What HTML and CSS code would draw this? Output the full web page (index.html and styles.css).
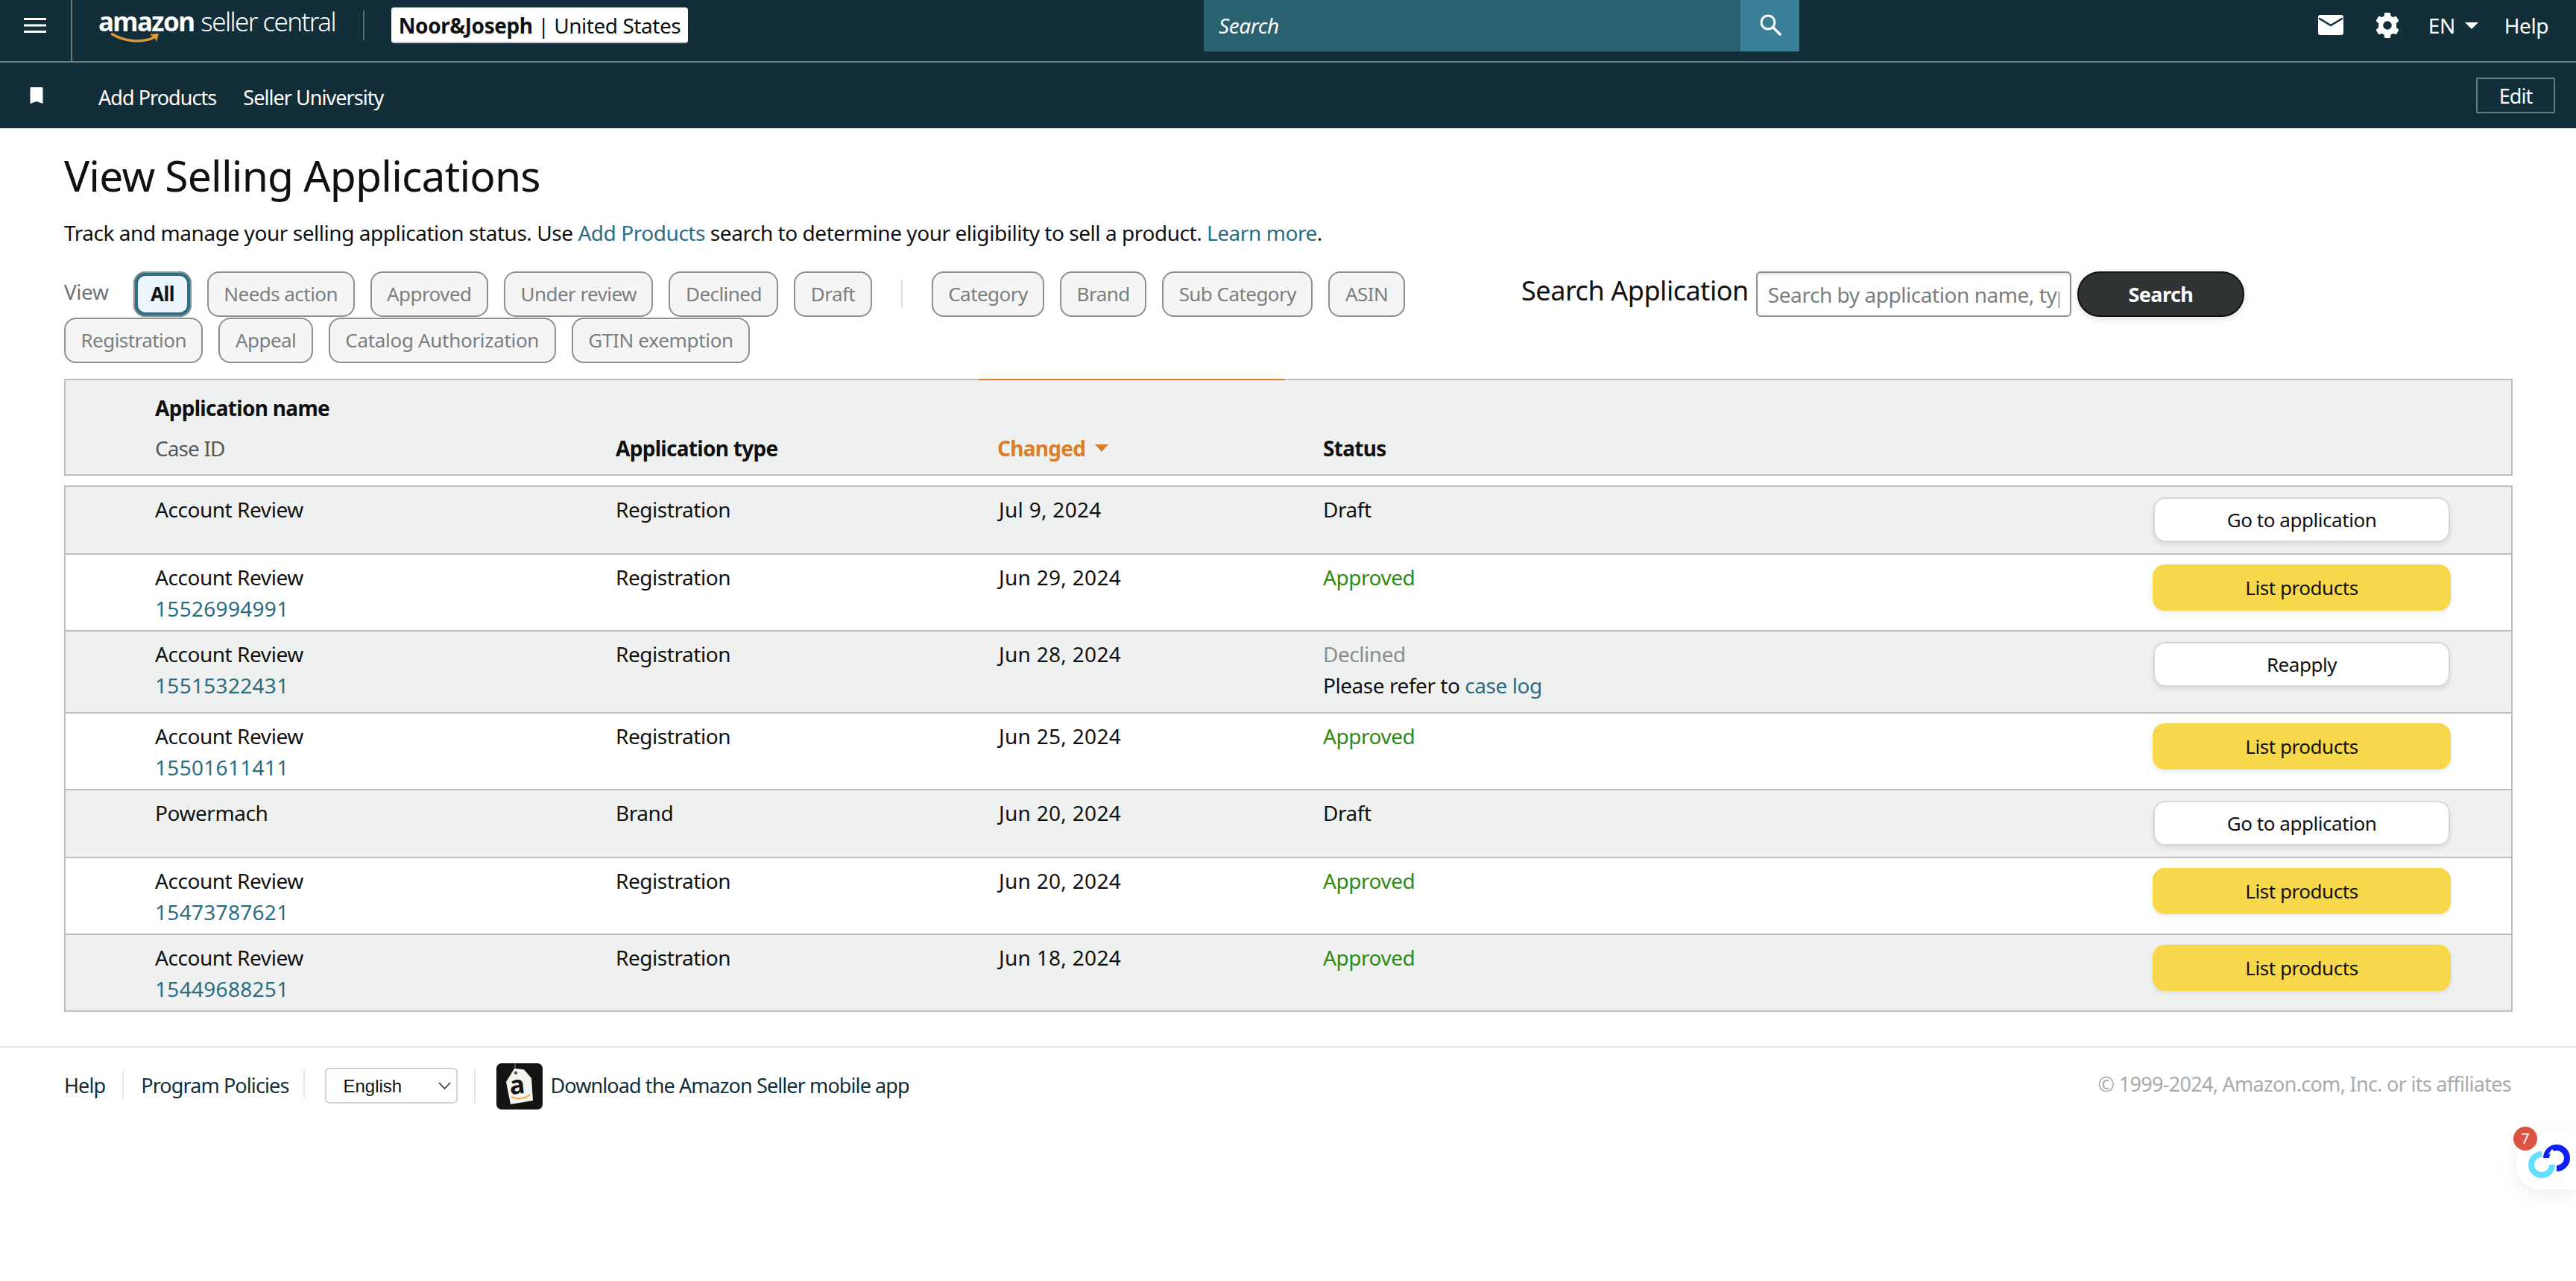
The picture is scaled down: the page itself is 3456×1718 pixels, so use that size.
FILE: index.html
```html
<!DOCTYPE html>
<html lang="en">
<head>
<meta charset="utf-8">
<title>View Selling Applications</title>
<link rel="stylesheet" href="styles.css">
</head>
<body>
<header class="topbar">
  <div class="menu-cell">
    <svg class="hamburger" viewBox="0 0 30 20"><path d="M0 1.5h30M0 10h30M0 18.5h30" stroke="#fff" stroke-width="3"/></svg>
  </div>
  <div class="logo">
    <span class="logo-amazon">amazon</span><span class="logo-seller">seller central</span>
    <svg class="logo-smile" viewBox="0 0 66 16"><path d="M1 1.5C18 12 42 14 58 6" fill="none" stroke="#e3983a" stroke-width="3.4" stroke-linecap="round"/><path d="M52 2l12-1-3 11c-1-3-2-5-4-6z" fill="#e3983a"/></svg>
  </div>
  <div class="logo-divider"></div>
  <div class="store"><b>Noor&amp;Joseph</b> | United States</div>
  <div class="search-box">
    <div class="search-field">Search</div>
    <div class="search-btn">
      <svg viewBox="0 0 30 30" class="search-icon"><circle cx="12" cy="12" r="9" fill="none" stroke="#fff" stroke-width="3"/><path d="M18.5 18.5L28 28" stroke="#fff" stroke-width="3.4" stroke-linecap="round"/></svg>
    </div>
  </div>
  <div class="top-right">
    <svg class="mail" viewBox="0 0 34 27"><rect width="34" height="27" rx="3" fill="#fff"/><path d="M1 4.5L17 14L33 4.5" fill="none" stroke="#122e38" stroke-width="2.6"/></svg>
    <svg class="gear" viewBox="0 0 32 34"><path fill="#fff" fill-rule="evenodd" d="M12.4 0h7.200l1 4.600 2.600 1.500 4.600-1.400L31.400 11l-3.500 3.200v5.600l3.500 3.200-3.600 6.300-4.600-1.400-2.600 1.500-1 4.600h-7.200l-1-4.600-2.600-1.500-4.600 1.400L.6 23l3.500-3.200v-5.600L.6 11l3.600-6.300 4.600 1.400 2.600-1.500zM16 11.200a5.800 5.800 0 1 0 0 11.600 5.800 5.800 0 0 0 0-11.600z"/></svg>
    <span class="lang">EN</span>
    <span class="caret"></span>
    <span class="help">Help</span>
  </div>
</header>

<nav class="subnav">
  <svg class="bookmark" viewBox="0 0 18 22"><path fill="#fff" d="M2 0h14a1.500 1.500 0 0 1 1.500 1.500V22L9 19 .5 22V1.500A1.500 1.500 0 0 1 2 0z"/></svg>
  <a class="subnav-link">Add Products</a>
  <a class="subnav-link">Seller University</a>
  <button class="edit-btn">Edit</button>
</nav>

<main class="content">
  <h1 class="title">View Selling Applications</h1>
  <p class="intro">Track and manage your selling application status. Use <a class="link">Add Products</a> search to determine your eligibility to sell a product. <a class="link">Learn more</a>.</p>

  <section class="filters">
    <div class="chips">
      <span class="view-label">View</span>
      <span class="chip chip-active">All</span>
      <span class="chip">Needs action</span>
      <span class="chip">Approved</span>
      <span class="chip">Under review</span>
      <span class="chip">Declined</span>
      <span class="chip">Draft</span>
      <span class="chip-sep"></span>
      <span class="chip">Category</span>
      <span class="chip">Brand</span>
      <span class="chip">Sub Category</span>
      <span class="chip">ASIN</span>
      <span class="chip">Registration</span>
      <span class="chip">Appeal</span>
      <span class="chip chip-long">Catalog Authorization</span>
      <span class="chip chip-long">GTIN exemption</span>
    </div>
    <div class="app-search">
      <label class="app-search-label">Search Application</label>
      <input class="app-search-input" placeholder="Search by application name, type, brand" readonly>
      <button class="app-search-btn">Search</button>
    </div>
  </section>

  <div class="table-head">
    <span class="head-accent"></span>
    <div class="cell-name"><div class="head-line"><b>Application name</b></div><div class="head-line head-sub">Case ID</div></div>
    <div class="cell-end"><b>Application type</b></div>
    <div class="cell-end head-sort"><b>Changed</b><span class="sort-caret"></span></div>
    <div class="cell-end"><b>Status</b></div>
  </div>

  <div class="table">
    <div class="row alt"><div>Account Review</div><div>Registration</div><div class="num">Jul 9, 2024</div><div>Draft</div><button class="btn btn-white">Go to application</button></div>
    <div class="row"><div>Account Review<br><a class="link num">15526994991</a></div><div>Registration</div><div class="num">Jun 29, 2024</div><div class="ok">Approved</div><button class="btn btn-yellow">List products</button></div>
    <div class="row alt row-tall"><div>Account Review<br><a class="link num">15515322431</a></div><div>Registration</div><div class="num">Jun 28, 2024</div><div><span class="declined">Declined</span><br>Please refer to <a class="link">case log</a></div><button class="btn btn-white">Reapply</button></div>
    <div class="row"><div>Account Review<br><a class="link num">15501611411</a></div><div>Registration</div><div class="num">Jun 25, 2024</div><div class="ok">Approved</div><button class="btn btn-yellow">List products</button></div>
    <div class="row alt"><div>Powermach</div><div>Brand</div><div class="num">Jun 20, 2024</div><div>Draft</div><button class="btn btn-white">Go to application</button></div>
    <div class="row"><div>Account Review<br><a class="link num">15473787621</a></div><div>Registration</div><div class="num">Jun 20, 2024</div><div class="ok">Approved</div><button class="btn btn-yellow">List products</button></div>
    <div class="row alt"><div>Account Review<br><a class="link num">15449688251</a></div><div>Registration</div><div class="num">Jun 18, 2024</div><div class="ok">Approved</div><button class="btn btn-yellow">List products</button></div>
  </div>
</main>

<footer class="footer">
  <a class="foot-link">Help</a>
  <span class="foot-sep"></span>
  <a class="foot-link">Program Policies</a>
  <span class="foot-sep foot-sep-b"></span>
  <select class="foot-select"><option>English</option></select>
  <span class="foot-sep foot-sep-tall"></span>
  <svg class="app-icon" viewBox="0 0 62 62">
    <rect width="62" height="62" rx="7" fill="#141414"/>
    <path d="M25 0v8" stroke="#666" stroke-width="1.500"/>
    <path d="M24 7l13 1.500L47 20l2 30-30 5-6-30z" fill="#f6f4ee"/>
    <circle cx="26" cy="13" r="2.200" fill="#555"/>
    <text x="28" y="41" class="app-icon-a" transform="rotate(-6 28 32)">a</text>
    <path d="M20 45c8 4 18 3 25-3" fill="none" stroke="#eaa94a" stroke-width="2.200"/>
  </svg>
  <a class="foot-link foot-app">Download the Amazon Seller mobile app</a>
  <span class="copyright">© 1999-2024, Amazon.com, Inc. or its affiliates</span>
</footer>

<aside class="widget">
  <span class="badge">7</span>
  <svg class="widget-logo" viewBox="0 0 56 46">
    <path d="M24 18A14 14 0 1 1 38 32" fill="none" stroke="#0a20f5" stroke-width="8"/>
    <path d="M18 13A14 14 0 1 0 32 27" fill="none" stroke="#62e0fb" stroke-width="8"/>
    <path d="M27 13L32 6l4 5z" fill="#fff"/>
  </svg>
</aside>
</body>
</html>
```
FILE: styles.css
```css
* { box-sizing: border-box; }
html, body { margin: 0; padding: 0; background: #fff; }
body {
  width: 3456px;
  height: 1718px;
  overflow: hidden;
  position: relative;
  font-family: "Noto Sans", "Open Sans", sans-serif;
  font-size: 28px;
  letter-spacing: -0.45px;
  color: #0f1111;
}
b { font-weight: 700; }
.link { color: #2b6c80; }

.topbar {
  height: 84px;
  background: #122e38;
  border-bottom: 2px solid #6c7a79;
  display: flex;
  align-items: flex-start;
  color: #fff;
}
.menu-cell {
  width: 97px;
  height: 82px;
  border-right: 2px solid #6c7a79;
  padding: 24px 0 0 32px;
  flex: none;
}
.hamburger { display: block; width: 30px; height: 20px; }
.logo {
  position: relative;
  margin-left: 35px;
  width: 320px;
  height: 62px;
  flex: none;
  display: flex;
  align-items: baseline;
  line-height: 62px;
  color: #fff;
  letter-spacing: 0;
  white-space: nowrap;
}
.logo-amazon { font-size: 35px; font-weight: 700; letter-spacing: -1.6px; margin-right: 9px; line-height: 58px; }
.logo-seller { font-size: 35px; font-weight: 300; letter-spacing: -1.6px; line-height: 58px; }
.logo-smile { position: absolute; left: 17px; top: 44px; width: 66px; height: 16px; }
.logo-divider { width: 2px; height: 40px; background: #55696c; margin: 14px 0 0 35px; flex: none; }
.store {
  margin: 10px 0 0 36px;
  width: 398px;
  height: 48px;
  background: #fff;
  border-radius: 4px;
  border-bottom: 2px solid #c4c8c8;
  color: #0f1111;
  text-align: center;
  line-height: 48px;
  white-space: nowrap;
  flex: none;
}
.search-box {
  margin-left: 692px;
  display: flex;
  height: 69px;
  flex: none;
}
.search-field {
  width: 720px;
  background: #2a6170;
  padding: 0 0 0 20px;
  line-height: 69px;
  font-style: italic;
  color: #fff;
}
.search-btn {
  width: 79px;
  background: #3a8098;
  padding: 18px 0 0 25px;
}
.search-icon { display: block; width: 30px; height: 30px; }
.top-right {
  margin-left: auto;
  height: 82px;
  display: flex;
  align-items: flex-start;
  padding-right: 37px;
  color: #fff;
}
.mail { width: 34px; height: 27px; margin: 20px 43px 0 0; }
.gear { width: 32px; height: 34px; margin: 17px 39px 0 0; }
.lang { line-height: 68px; margin-right: 13px; }
.caret {
  width: 0; height: 0;
  border-left: 9px solid transparent;
  border-right: 9px solid transparent;
  border-top: 9px solid #fff;
  margin: 30px 35px 0 0;
}
.help { line-height: 68px; }

.subnav {
  height: 88px;
  background: #122e38;
  display: flex;
  align-items: flex-start;
  color: #fff;
  padding: 0 28px 0 40px;
  font-size: 27px;
  letter-spacing: -0.95px;
}
.bookmark { width: 18px; height: 22px; margin: 33px 74px 0 0; flex: none; }
.subnav-link { line-height: 94px; margin-right: 36px; }
.edit-btn {
  margin: 20px 0 0 auto;
  width: 106px;
  height: 48px;
  background: transparent;
  border: 2px solid #6c7a79;
  border-radius: 2px;
  font: inherit;
  letter-spacing: inherit;
  color: #fff;
  padding: 0;
}

.content { padding: 0 85px 0 86px; }
.title {
  margin: 0;
  padding-top: 25px;
  font-size: 57px;
  font-weight: 400;
  line-height: 76px;
  letter-spacing: -0.84px;
  color: #0f1111;
}
.intro { margin: 19px 0 0; line-height: 40px; height: 40px; }

.filters { display: flex; margin-top: 32px; }
.chips {
  width: 1914px;
  display: flex;
  flex-wrap: wrap;
  row-gap: 1px;
  column-gap: 21px;
  font-size: 26px;
  letter-spacing: -0.55px;
  flex: none;
}
.view-label { color: #6c7378; line-height: 54px; font-size: 28px; letter-spacing: -0.45px; width: 72px; }
.chip {
  height: 61px;
  padding: 0 20.5px;
  line-height: 57px;
  border: 2px solid #8b908f;
  border-radius: 16px;
  background: #f5f5f5;
  color: #7a7e7e;
  white-space: nowrap;
}
.chip-long { letter-spacing: -0.3px; }
.chip-active {
  background: #edf5fc;
  color: #0f1111;
  font-weight: 700;
  border: 6px solid #2d6f84;
  outline: 2px solid #8b908f;
  outline-offset: -2px;
  line-height: 49px;
  padding: 0 17px;
  border-radius: 16px;
}
.chip-sep { width: 2px; height: 38px; background: #dde0e0; margin: 11px 18px 0 18px; }
.app-search { display: flex; align-items: flex-start; margin-left: 41px; }
.app-search-label { font-size: 36px; line-height: 52px; margin-right: 10px; color: #0f1111; letter-spacing: -0.45px; white-space: nowrap; }
.app-search-input {
  width: 423px;
  height: 61px;
  border: 2px solid #8b908f;
  border-radius: 6px;
  padding: 0 14px;
  font: inherit;
  letter-spacing: inherit;
  color: #6c7378;
  box-shadow: inset 0 2px 3px rgba(0,0,0,.12);
  outline: 0;
}
.app-search-input::placeholder { color: #7a7e7e; opacity: 1; }
.app-search-btn {
  margin-left: 8px;
  width: 224px;
  height: 61px;
  border: 2px solid #0f1111;
  border-radius: 30px;
  background: #303333;
  color: #fff;
  font: inherit;
  font-size: 27px;
  font-weight: 700;
  letter-spacing: -0.55px;
  box-shadow: 0 3px 8px rgba(0,0,0,.12);
}

.table-head, .row {
  display: grid;
  padding-left: 120px;
  line-height: 42px;
}
.table-head {
  position: relative;
  margin-top: 21px;
  height: 130px;
  background: #eff1f0;
  border: 2px solid #bbbfbe;
  padding-top: 16px;
  grid-template-columns: 618px 512px 437px 1fr;
}
.table-head b { letter-spacing: -0.7px; }
.head-line { height: 54px; line-height: 42px; }
.head-sub { color: #565959; letter-spacing: -0.9px; }
.cell-end { padding-top: 54px; }
.head-sort { color: #d97e2b; display: flex; align-items: flex-start; }
.sort-caret {
  width: 0; height: 0;
  border-left: 9px solid transparent;
  border-right: 9px solid transparent;
  border-top: 10px solid #d97e2b;
  margin: 16px 0 0 13px;
}
.head-accent {
  position: absolute;
  left: 1225px;
  top: -2px;
  width: 411px;
  height: 2px;
  background: #d97e2b;
}

.table { margin-top: 13px; border: 2px solid #bbbfbe; border-top: 0; }
.row {
  grid-template-columns: 618px 514px 435px 1fr 398px 82px;
  border-top: 2px solid #bbbfbe;
  padding-top: 9px;
  padding-bottom: 8px;
  background: #fff;
}
.num { letter-spacing: 0.3px; }
.row.alt { background: #eff1f0; }
.row-tall { padding-bottom: 15px; }
.ok { color: #2f8a12; }
.declined { color: #8a8d8d; }
.btn {
  font: inherit;
  letter-spacing: -0.45px;
  font-size: 26px;
  color: #0f1111;
  border-radius: 16px;
  align-self: start;
  padding: 0;
  width: 398px;
}
.btn-white {
  height: 60px;
  margin: 5px 0 7px;
  background: #fff;
  border: 2px solid #d5d9d9;
  box-shadow: 0 3px 6px rgba(15,17,17,.1);
}
.btn-yellow {
  width: 400px;
  height: 62px;
  margin: 4px 0 0 -1px;
  background: #f8d84b;
  border: 0;
  box-shadow: 0 3px 6px rgba(15,17,17,.08);
}

.footer {
  margin-top: 46px;
  border-top: 2px solid #e6e8e8;
  padding: 21px 87px 0 86px;
  display: flex;
  align-items: flex-start;
  height: 100px;
  font-size: 27px;
  letter-spacing: -0.9px;
}
.foot-link { color: #122e38; line-height: 60px; white-space: nowrap; }
.foot-sep { width: 2px; height: 38px; background: #e6e8e8; margin: 9px 23px 0 23px; flex: none; }
.foot-sep-b { margin: 9px 27px 0 20px; }
.foot-sep-tall { height: 48px; margin: 7px 28px 0 22px; }
.foot-select {
  appearance: none;
  -webkit-appearance: none;
  width: 178px;
  height: 48px;
  margin-top: 6px;
  border: 2px solid #cfd1d1;
  border-radius: 6px;
  background: #fff url("data:image/svg+xml,%3Csvg xmlns='http://www.w3.org/2000/svg' width='17' height='10'%3E%3Cpath d='M1 1l7.500 8L16 1' fill='none' stroke='%23222' stroke-width='1.400'/%3E%3C/svg%3E") no-repeat right 7px center;
  font-family: "Liberation Sans", Arial, sans-serif;
  font-size: 24px;
  letter-spacing: 0;
  padding-left: 22px;
  color: #0f1111;
}
.app-icon { width: 62px; height: 62px; margin-right: 10px; flex: none; }
.app-icon-a { font-family: "Noto Sans", sans-serif; font-size: 34px; font-weight: 700; text-anchor: middle; fill: #141414; letter-spacing: 0; }
.copyright { margin-left: auto; color: #a9abab; line-height: 56px; white-space: nowrap; letter-spacing: -0.7px; }

.widget {
  position: absolute;
  left: 3376px;
  top: 1519px;
  width: 80px;
  height: 76px;
  background: #fff;
  border-radius: 32px 0 0 32px;
  box-shadow: 0 6px 24px rgba(0,0,0,.08);
}
.badge {
  position: absolute;
  left: -4px;
  top: -8px;
  width: 32px;
  height: 32px;
  border-radius: 50%;
  background: #dd5342;
  color: #fff;
  font-size: 20px;
  line-height: 32px;
  text-align: center;
  letter-spacing: 0;
}
.widget-logo { position: absolute; left: 16px; top: 16px; width: 56px; height: 46px; }
```
